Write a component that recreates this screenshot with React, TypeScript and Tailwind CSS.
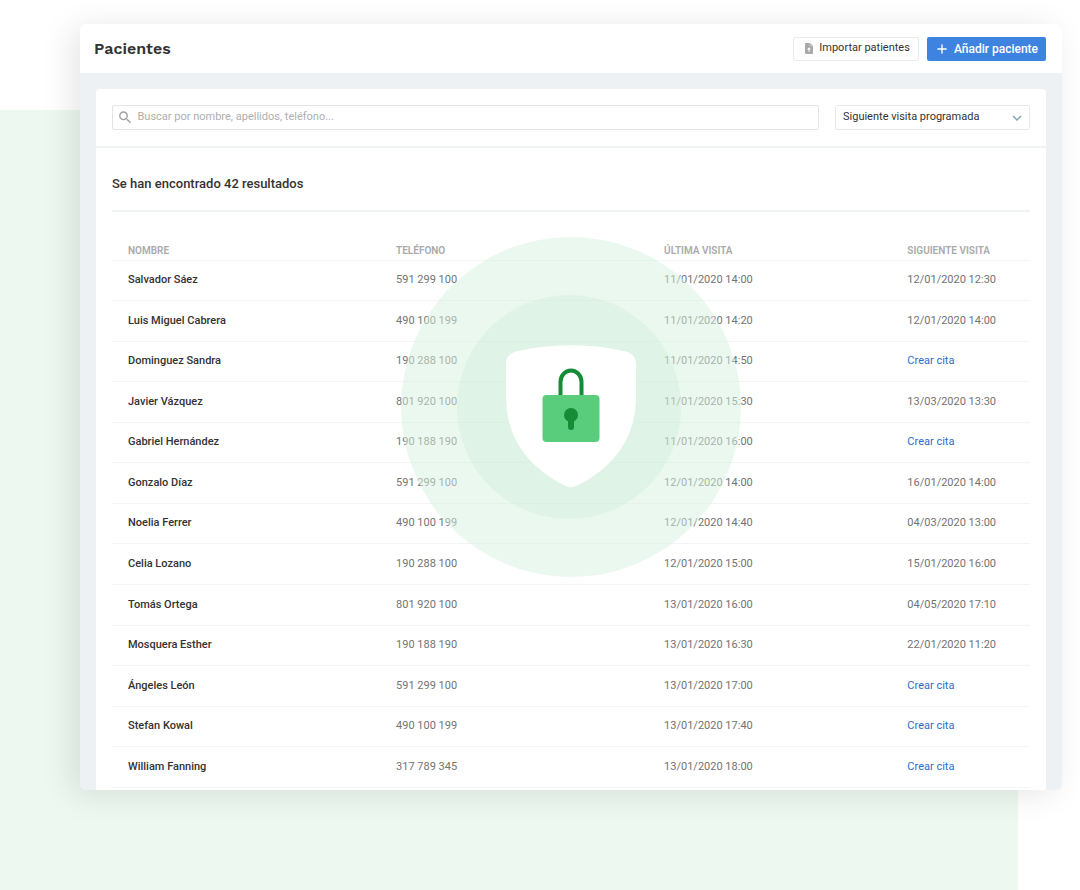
import { Plus } from "lucide-react";
import { MdSearch } from "react-icons/md";

type Patient = {
  name: string;
  phone: string;
  lastVisit: string;
  nextVisit: string | null;
};

const patients: Patient[] = [
  { name: "Salvador Sáez", phone: "591 299 100", lastVisit: "11/01/2020 14:00", nextVisit: "12/01/2020 12:30" },
  { name: "Luis Miguel Cabrera", phone: "490 100 199", lastVisit: "11/01/2020 14:20", nextVisit: "12/01/2020 14:00" },
  { name: "Dominguez Sandra", phone: "190 288 100", lastVisit: "11/01/2020 14:50", nextVisit: null },
  { name: "Javier Vázquez", phone: "801 920 100", lastVisit: "11/01/2020 15:30", nextVisit: "13/03/2020 13:30" },
  { name: "Gabriel Hernández", phone: "190 188 190", lastVisit: "11/01/2020 16:00", nextVisit: null },
  { name: "Gonzalo Díaz", phone: "591 299 100", lastVisit: "12/01/2020 14:00", nextVisit: "16/01/2020 14:00" },
  { name: "Noelia Ferrer", phone: "490 100 199", lastVisit: "12/01/2020 14:40", nextVisit: "04/03/2020 13:00" },
  { name: "Celia Lozano", phone: "190 288 100", lastVisit: "12/01/2020 15:00", nextVisit: "15/01/2020 16:00" },
  { name: "Tomás Ortega", phone: "801 920 100", lastVisit: "13/01/2020 16:00", nextVisit: "04/05/2020 17:10" },
  { name: "Mosquera Esther", phone: "190 188 190", lastVisit: "13/01/2020 16:30", nextVisit: "22/01/2020 11:20" },
  { name: "Ángeles León", phone: "591 299 100", lastVisit: "13/01/2020 17:00", nextVisit: null },
  { name: "Stefan Kowal", phone: "490 100 199", lastVisit: "13/01/2020 17:40", nextVisit: null },
  { name: "William Fanning", phone: "317 789 345", lastVisit: "13/01/2020 18:00", nextVisit: null },
];

function ImportIcon() {
  return (
    <svg viewBox="0 0 8 11" className="h-[11px] w-2" aria-hidden="true">
      <path d="M1 0h4l3 3v7a1 1 0 0 1-1 1H1a1 1 0 0 1-1-1V1a1 1 0 0 1 1-1z" fill="#a9a9a9" />
      <path d="M5 0v3h3" fill="none" stroke="#d8d8d8" strokeWidth="0.6" />
      <path d="M4 4.200 2 6.400h1.500v2.400h1V6.400H6z" fill="#fff" />
    </svg>
  );
}

function SecurityBadge() {
  return (
    <svg viewBox="0 0 340 340" className="size-[340px]" role="img" aria-label="Datos protegidos">
      <circle cx="170" cy="170" r="170" fill="#d7f1df" fillOpacity="0.5" />
      <circle cx="168" cy="170" r="112" fill="#bbe8cb" fillOpacity="0.25" />
      <path
        d="M115 114.500C150 106.200 190 106.200 225 114.500C231 116 235 120.500 235 127V160C235 200 213 231 175 249Q170 251.500 165 249C127 231 105 200 105 160V127C105 120.500 109 116 115 114.500Z"
        fill="#fff"
      />
      <path d="M159.500 160v-15a10.500 11.500 0 0 1 21 0v15" fill="none" stroke="#168c37" strokeWidth="4" />
      <rect x="141.500" y="158" width="57" height="47" rx="4" fill="#59cd7b" />
      <circle cx="170" cy="178" r="7" fill="#168c37" />
      <path d="M170 179v11" stroke="#168c37" strokeWidth="6" strokeLinecap="round" />
    </svg>
  );
}

function PageHeader() {
  return (
    <header className="flex h-[49px] items-center justify-between bg-white pr-4 pl-[14px]">
      <h1 className="font-['Work_Sans',Inter,sans-serif] text-base font-semibold text-[#333]">Pacientes</h1>
      <div className="flex items-center gap-2">
        <button
          type="button"
          className="flex h-6 items-center gap-[6px] rounded-[2px] border border-[#e9eced] bg-white pr-2 pl-[11px] text-[11px] text-[#333]"
        >
          <ImportIcon />
          Importar patientes
        </button>
        <button
          type="button"
          className="flex h-6 items-center gap-[5px] rounded-[2px] bg-[#3f83e0] px-2 text-xs font-medium text-white"
        >
          <Plus className="size-[14px]" strokeWidth={2.4} />
          Añadir paciente
        </button>
      </div>
    </header>
  );
}

function Filters() {
  return (
    <div className="flex gap-4 border-b-2 border-[#f0f3f4] p-4">
      <label className="flex h-[25px] flex-1 items-center gap-1 rounded-[2px] border border-[#e2e5e5] px-1">
        <MdSearch className="size-[17px] text-[#a3a3a3]" />
        <input
          type="search"
          aria-label="Buscar pacientes"
          placeholder="Buscar por nombre, apellidos, teléfono..."
          className="w-full text-[11px] text-[#333] outline-none placeholder:text-[#aeaeae]"
        />
      </label>
      <div className="relative w-[195px]">
        <select
          aria-label="Ordenar por"
          className="block h-[25px] w-full appearance-none rounded-[2px] border border-[#e6e9ea] bg-white pl-[7px] text-[11px] text-[#333]"
        >
          <option>Siguiente visita programada</option>
          <option>Última visita</option>
        </select>
        <svg viewBox="0 0 10 6" className="pointer-events-none absolute top-[10px] right-2 h-[6px] w-[10px]" aria-hidden="true">
          <path d="M1 1l4 4 4-4" fill="none" stroke="#84a9ab" strokeWidth="1.500" />
        </svg>
      </div>
    </div>
  );
}

function PatientsTable() {
  return (
    <table className="h-[576px] w-full table-fixed border-collapse text-left text-[11px] text-[#737373]">
      <thead>
        <tr className="h-[48px] border-b border-[#f1f5f5] align-bottom text-[10px] leading-[15px] text-[#aaa] uppercase">
          <th className="w-[29.2%] pb-[2px] pl-4 font-semibold">Nombre</th>
          <th className="w-[29.2%] pb-[2px] pl-4 font-semibold">Teléfono</th>
          <th className="w-[26.5%] pb-[2px] pl-4 font-semibold">Última visita</th>
          <th className="pb-[2px] pl-4 font-semibold">Siguiente visita</th>
        </tr>
      </thead>
      <tbody>
        {patients.map((patient) => (
          <tr key={patient.name} className="border-b border-[#f1f5f5]">
            <td className="pl-4 font-medium text-[#333]">{patient.name}</td>
            <td className="pl-4">{patient.phone}</td>
            <td className="pl-4">{patient.lastVisit}</td>
            <td className="pl-4">
              {patient.nextVisit ?? (
                <a href="#crear-cita" className="text-[#2b6dcc]">
                  Crear cita
                </a>
              )}
            </td>
          </tr>
        ))}
      </tbody>
    </table>
  );
}

export default function App() {
  return (
    <main className="min-h-screen bg-white bg-[linear-gradient(#edf8f1,#edf8f1)] bg-[size:calc(100%-62px)_100%] bg-[position:0_110px] bg-no-repeat pt-6 pr-[18px] pb-[100px] pl-20 font-[Roboto,sans-serif]">
      <div className="relative overflow-hidden rounded-md bg-[#edf1f3] shadow-[-8px_4px_32px_rgba(0,0,0,0.1)]">
        <PageHeader />
        <div className="px-4 pt-4">
          <section className="rounded-t bg-white pb-[2px]">
            <Filters />
            <div className="px-4">
              <h2 className="border-b-2 border-[#f0f3f4] pt-[27px] pb-[17px] text-[13px] leading-[18px] font-medium text-[#333]">
                Se han encontrado 42 resultados
              </h2>
              <PatientsTable />
            </div>
          </section>
        </div>
        <div className="pointer-events-none absolute inset-0 flex items-center justify-center">
          <SecurityBadge />
        </div>
      </div>
    </main>
  );
}
